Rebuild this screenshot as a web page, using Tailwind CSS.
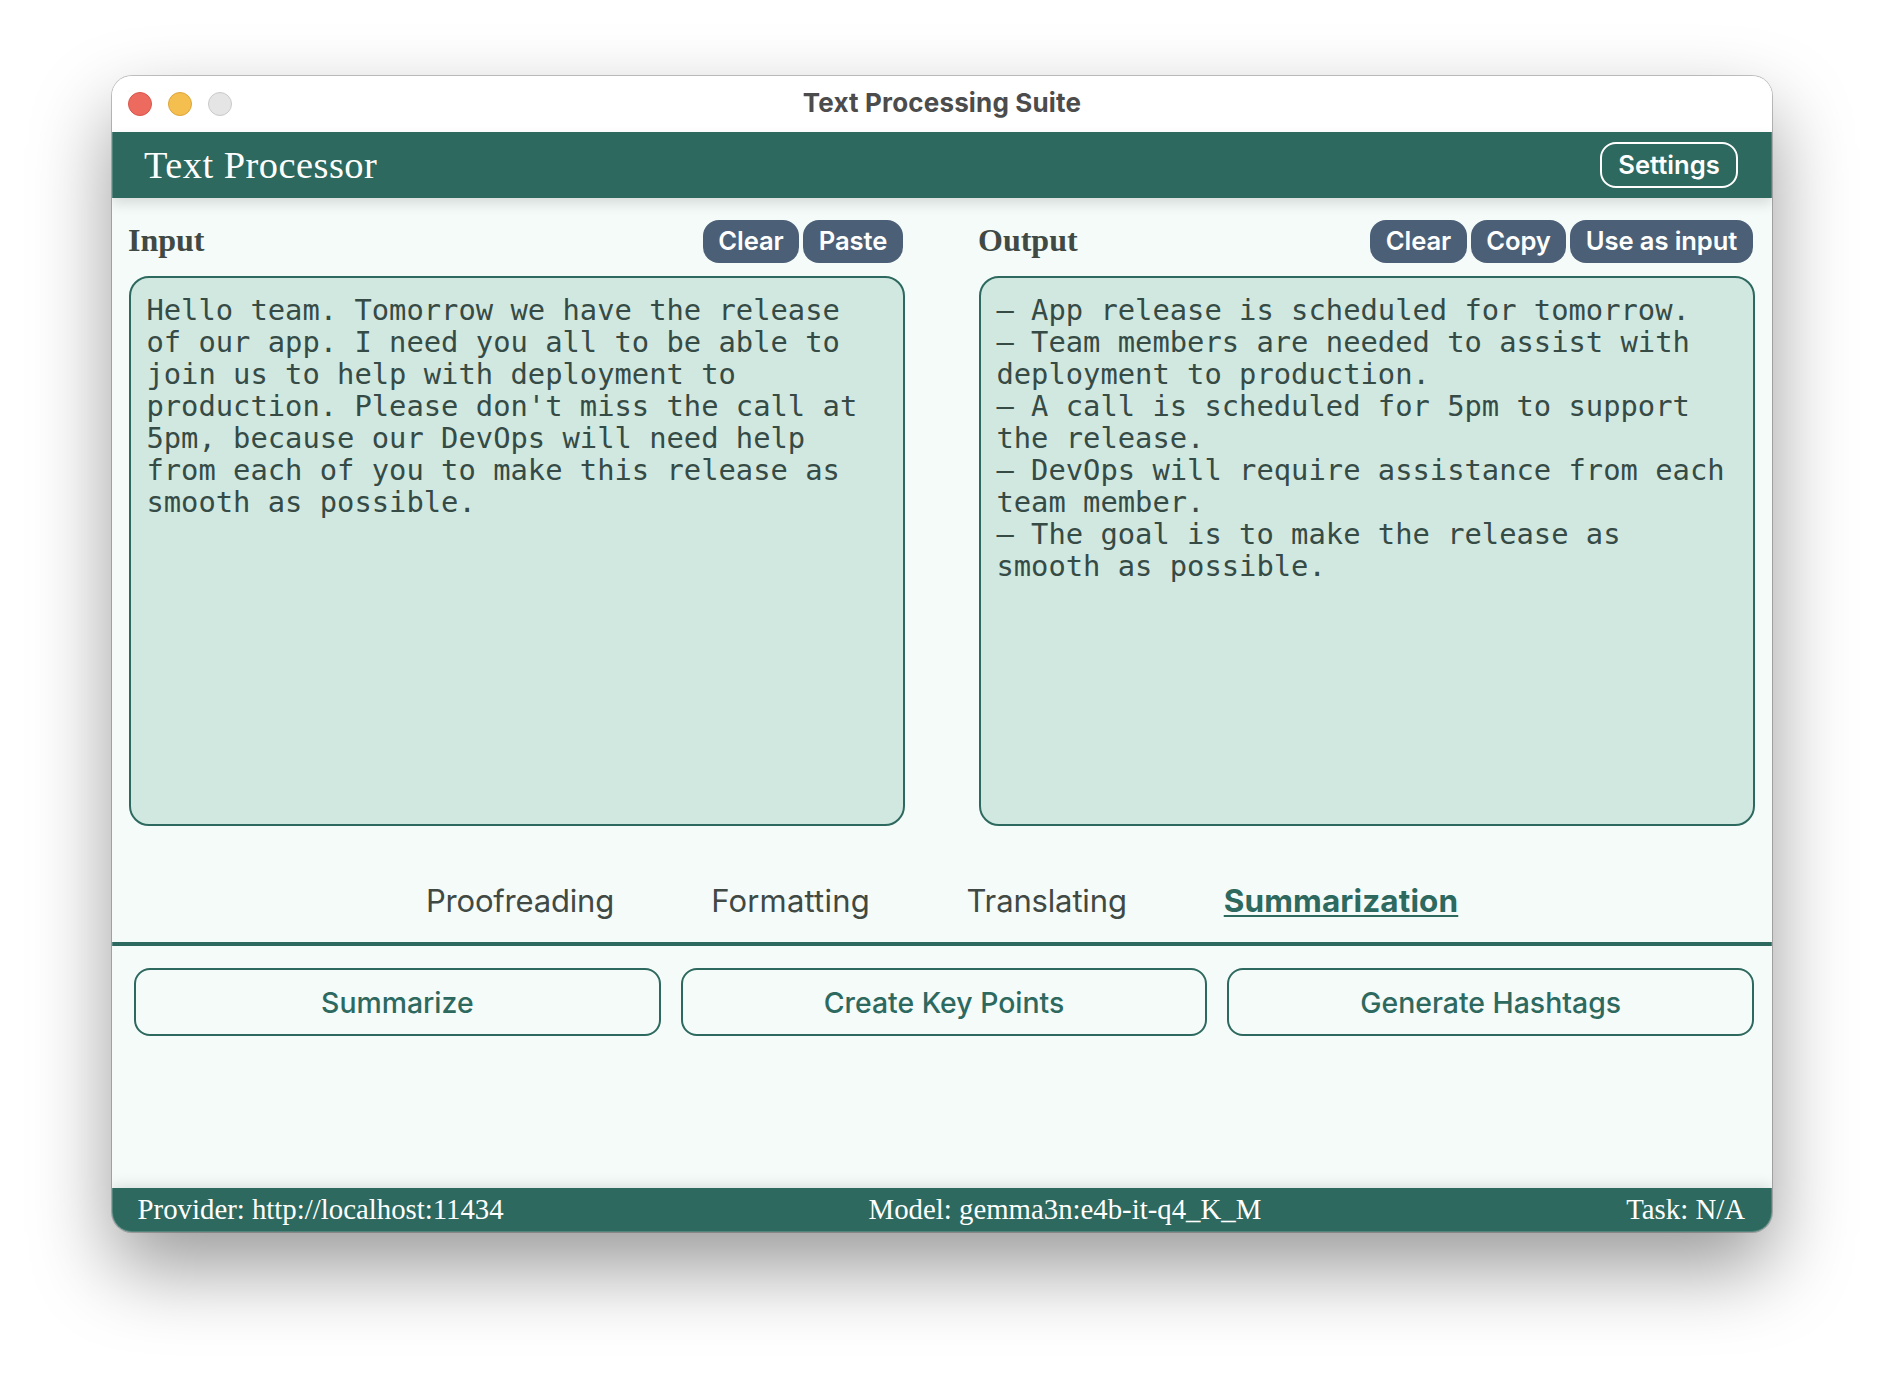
<!DOCTYPE html>
<html lang="en">
<head>
<meta charset="utf-8">
<title>Text Processing Suite</title>
<script src="https://cdn.jsdelivr.net/npm/@tailwindcss/browser@4"></script>
</head>
<body class="bg-white w-[1884px] h-[1380px] overflow-hidden px-[112px] pt-[76px] font-['Inter',sans-serif]">
<div class="relative flex flex-col w-[1660px] h-[1156px] rounded-[20px] bg-[#f5fbf9] shadow-[0_0_0_1px_rgba(0,0,0,0.22),0_36px_80px_rgba(0,0,0,0.4)]">
  <div class="flex flex-col flex-1 rounded-[20px] overflow-hidden">

    <!-- Title bar -->
    <div class="grid grid-cols-[1fr_auto_1fr] items-center h-14 shrink-0 bg-white px-4">
      <div class="flex gap-4">
        <span class="size-6 rounded-full bg-[#ed6a5e] border border-[#d8564b]"></span>
        <span class="size-6 rounded-full bg-[#f5bf4f] border border-[#dca53a]"></span>
        <span class="size-6 rounded-full bg-[#e5e5e5] border border-[#c9c9c9]"></span>
      </div>
      <div class="pb-[3px] text-[26px] leading-8 font-bold tracking-[0.16px] text-[#4c4c4c]">Text Processing Suite</div>
    </div>

    <!-- App header -->
    <header class="relative flex items-center justify-between h-[66px] shrink-0 bg-[#2d695f] pl-8 pr-[34px] shadow-[0_6px_12px_rgba(0,0,0,0.12)]">
      <h1 class="font-['Liberation_Serif',serif] text-[38.4px] leading-[44px] tracking-[0.48px] text-white">Text Processor</h1>
      <button class="w-[138px] h-[46px] rounded-2xl border-2 border-white text-[25.6px] leading-none font-semibold text-white">Settings</button>
    </header>

    <!-- Editors -->
    <main class="flex gap-[74px] shrink-0 px-[17px] pt-[22px]">
      <section class="w-[776px]">
        <div class="flex items-start justify-between h-14 pr-0.5">
          <h2 class="font-['Liberation_Serif',serif] text-[32px] leading-[41px] font-bold text-[#404944] -ml-px">Input</h2>
          <div class="flex gap-1 text-[25.6px] leading-[41px] font-semibold tracking-[-0.1px] text-white text-center">
            <button class="w-24 h-[43px] pb-0.5 rounded-2xl bg-[#4b5f77]">Clear</button>
            <button class="w-[100px] h-[43px] pb-0.5 rounded-2xl bg-[#4b5f77]">Paste</button>
          </div>
        </div>
        <div class="h-[550px] rounded-[20px] border-2 border-[#2d695f] bg-[#d1e8e1] px-[15.4px] pt-4 font-['DejaVu_Sans_Mono',monospace] text-[28.8px] leading-8 text-[#364b45] whitespace-pre">Hello team. Tomorrow we have the release
of our app. I need you all to be able to
join us to help with deployment to
production. Please don't miss the call at
5pm, because our DevOps will need help
from each of you to make this release as
smooth as possible.</div>
      </section>
      <section class="w-[776px]">
        <div class="flex items-start justify-between h-14 pr-0.5">
          <h2 class="font-['Liberation_Serif',serif] text-[32px] leading-[41px] font-bold text-[#404944] -ml-px">Output</h2>
          <div class="flex gap-1 text-[25.6px] leading-[41px] font-semibold tracking-[-0.1px] text-white text-center">
            <button class="w-[97px] h-[43px] pb-0.5 rounded-2xl bg-[#4b5f77]">Clear</button>
            <button class="w-[95px] h-[43px] pb-0.5 rounded-2xl bg-[#4b5f77]">Copy</button>
            <button class="w-[183px] h-[43px] pb-0.5 rounded-2xl bg-[#4b5f77]">Use as input</button>
          </div>
        </div>
        <div class="h-[550px] rounded-[20px] border-2 border-[#2d695f] bg-[#d1e8e1] px-[15.4px] pt-4 font-['DejaVu_Sans_Mono',monospace] text-[28.8px] leading-8 text-[#364b45] whitespace-pre">– App release is scheduled for tomorrow.
– Team members are needed to assist with
deployment to production.
– A call is scheduled for 5pm to support
the release.
– DevOps will require assistance from each
team member.
– The goal is to make the release as
smooth as possible.</div>
      </section>
    </main>

    <!-- Tabs -->
    <nav class="flex justify-center gap-24 h-[120px] shrink-0 pt-[55px] border-b-4 border-[#2d695f] text-[31px] leading-10 text-[#404944] text-center whitespace-nowrap">
      <span class="w-[189px] tracking-[-0.2px]">Proofreading</span>
      <span class="w-[160px] tracking-[0.2px]">Formatting</span>
      <span class="w-[161px] pr-0.5 tracking-[-0.15px]">Translating</span>
      <span class="w-[235px] text-[31.5px] font-bold tracking-[0.12px] text-[#2d695f] underline decoration-2 underline-offset-[3px] [text-decoration-skip-ink:none]">Summarization</span>
    </nav>

    <!-- Actions -->
    <div class="grid grid-cols-3 gap-5 pl-[22px] pr-[18px] pt-[22px] flex-1 content-start text-[28.4px] font-medium text-[#2d695f]">
      <button class="h-[68px] pt-0.5 rounded-2xl border-2 border-[#2d695f] leading-none">Summarize</button>
      <button class="h-[68px] pt-0.5 rounded-2xl border-2 border-[#2d695f] leading-none">Create Key Points</button>
      <button class="h-[68px] pt-0.5 rounded-2xl border-2 border-[#2d695f] leading-none">Generate Hashtags</button>
    </div>

    <!-- Status bar -->
    <footer class="flex items-center justify-between h-11 shrink-0 bg-[#2d695f] pb-0.5 pl-[25.6px] pr-[27px] font-['Liberation_Serif',serif] text-[28.8px] leading-8 text-white shadow-[0_0_16px_rgba(0,0,0,0.16)]">
      <span>Provider: http://localhost:11434</span>
      <span>Model: gemma3n:e4b-it-q4_K_M</span>
      <span>Task: N/A</span>
    </footer>
  </div>
  <div class="absolute inset-0 rounded-[20px] pointer-events-none shadow-[inset_0_0_0_1px_rgba(255,255,255,0.18)]"></div>
</div>
</body>
</html>
